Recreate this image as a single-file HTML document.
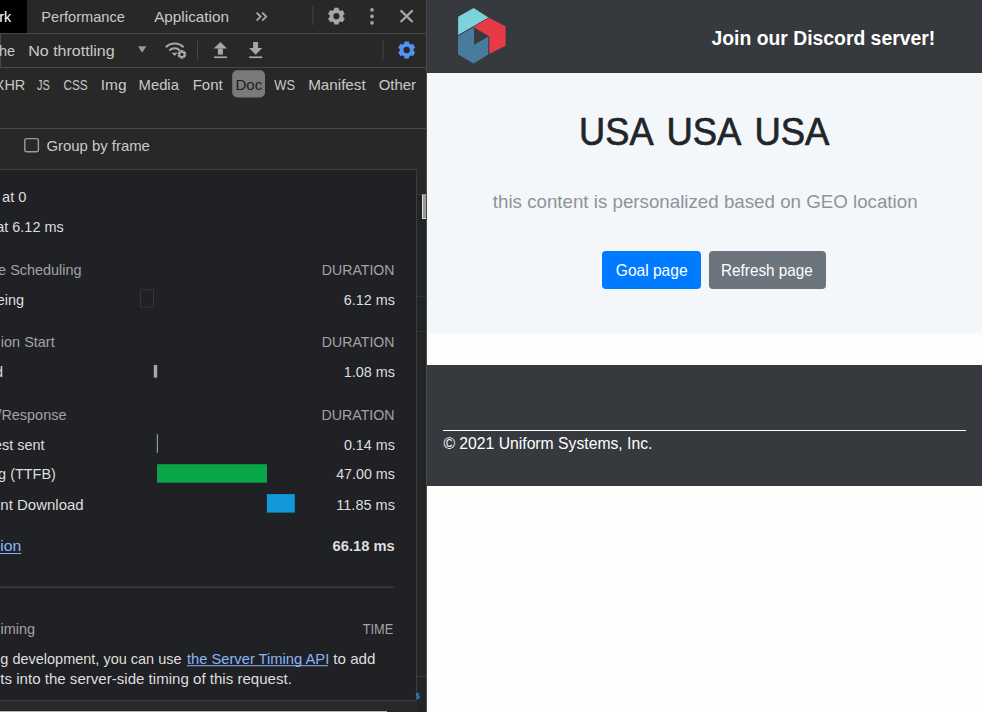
<!DOCTYPE html>
<html><head><meta charset="utf-8"><title>DevTools</title>
<style>
html,body{margin:0;padding:0;width:982px;height:712px;overflow:hidden;background:#fdfdfc;}
svg{position:absolute;left:0;top:0;display:block;font-family:"Liberation Sans",sans-serif;}
</style></head><body>
<svg width="982" height="712" viewBox="0 0 982 712">
<rect x="0" y="0" width="426" height="712" fill="#282828"/>
<rect x="0" y="0" width="27" height="33" fill="#000"/>
<rect x="0" y="33" width="426" height="1" fill="#474747"/>
<rect x="0" y="67" width="426" height="1" fill="#474747"/>
<rect x="0" y="128" width="426" height="1" fill="#474747"/>
<rect x="0" y="34" width="1" height="33" fill="#474747"/>
<rect x="426" y="0" width="1" height="712" fill="#4a4a4a"/>
<path d="M256.6,12.6 L260.6,16.6 L256.6,20.6 M262.2,12.6 L266.2,16.6 L262.2,20.6" fill="none" stroke="#a6a6a6" stroke-width="1.9"/>
<rect x="312.5" y="6" width="1" height="19" fill="#454545"/>
<rect x="197" y="40.5" width="1" height="19" fill="#454545"/>
<rect x="382.5" y="40" width="1" height="20" fill="#454545"/>
<path d="M338.80,9.84 L338.63,7.79 L334.17,7.79 L334.00,9.84 L333.49,10.05 L333.00,10.31 L332.53,10.61 L332.09,10.94 L330.23,10.06 L328.00,13.93 L329.69,15.09 L329.62,15.64 L329.60,16.20 L329.62,16.76 L329.69,17.31 L328.00,18.47 L330.23,22.34 L332.09,21.46 L332.53,21.79 L333.00,22.09 L333.49,22.35 L334.00,22.56 L334.17,24.61 L338.63,24.61 L338.80,22.56 L339.31,22.35 L339.80,22.09 L340.27,21.79 L340.71,21.46 L342.57,22.34 L344.80,18.47 L343.11,17.31 L343.18,16.76 L343.20,16.20 L343.18,15.64 L343.11,15.09 L344.80,13.93 L342.57,10.06 L340.71,10.94 L340.27,10.61 L339.80,10.31 L339.31,10.05Z M333.30,16.20 a3.1,3.1 0 1,0 6.2,0 a3.1,3.1 0 1,0 -6.2,0Z" fill="#a6a6a6" fill-rule="evenodd"/>
<circle cx="372" cy="9.9" r="1.8" fill="#a6a6a6"/>
<circle cx="372" cy="16.4" r="1.8" fill="#a6a6a6"/>
<circle cx="372" cy="22.9" r="1.8" fill="#a6a6a6"/>
<path d="M400.6,10.4 L412.6,22 M412.6,10.4 L400.6,22" stroke="#a6a6a6" stroke-width="2.2" fill="none"/>
<polygon points="138,46.3 146.3,46.3 142.15,52.8" fill="#9a9a9a"/>
<path d="M165.8,47.2 A12.6,12.6 0 0 1 183.6,47.2" fill="none" stroke="#a6a6a6" stroke-width="2.1"/>
<path d="M169.3,50.4 A7.6,7.6 0 0 1 179.9,50.4" fill="none" stroke="#a6a6a6" stroke-width="2.1"/>
<path d="M171.6,52.8 L177.6,52.8 L174.6,56 Z" fill="#a6a6a6"/>
<path d="M183.42,51.25 L183.36,50.04 L180.44,50.04 L180.38,51.25 L180.26,51.31 L180.15,51.37 L180.04,51.44 L179.93,51.51 L178.86,50.95 L177.39,53.49 L178.41,54.14 L178.40,54.27 L178.40,54.40 L178.40,54.53 L178.41,54.66 L177.39,55.31 L178.86,57.85 L179.93,57.29 L180.04,57.36 L180.15,57.43 L180.26,57.49 L180.38,57.55 L180.44,58.76 L183.36,58.76 L183.42,57.55 L183.54,57.49 L183.65,57.43 L183.76,57.36 L183.87,57.29 L184.94,57.85 L186.41,55.31 L185.39,54.66 L185.40,54.53 L185.40,54.40 L185.40,54.27 L185.39,54.14 L186.41,53.49 L184.94,50.95 L183.87,51.51 L183.76,51.44 L183.65,51.37 L183.54,51.31Z M180.30,54.40 a1.6,1.6 0 1,0 3.2,0 a1.6,1.6 0 1,0 -3.2,0Z" fill="#a6a6a6" fill-rule="evenodd"/>
<polygon points="213.7,48.6 220.4,42 227.1,48.6" fill="#a6a6a6"/>
<rect x="217.9" y="48.5" width="5" height="6.1" fill="#a6a6a6"/>
<rect x="214" y="56.4" width="13" height="1.7" fill="#a6a6a6"/>
<rect x="253.1" y="42" width="5" height="6.2" fill="#a6a6a6"/>
<polygon points="249,48.1 262.3,48.1 255.65,54.7" fill="#a6a6a6"/>
<rect x="249.2" y="56.4" width="13" height="1.7" fill="#a6a6a6"/>
<path d="M409.13,43.54 L408.96,41.49 L404.44,41.49 L404.27,43.54 L403.75,43.76 L403.25,44.02 L402.77,44.33 L402.32,44.67 L400.46,43.79 L398.21,47.70 L399.89,48.88 L399.82,49.44 L399.80,50.00 L399.82,50.56 L399.89,51.12 L398.21,52.30 L400.46,56.21 L402.32,55.33 L402.77,55.67 L403.25,55.98 L403.75,56.24 L404.27,56.46 L404.44,58.51 L408.96,58.51 L409.13,56.46 L409.65,56.24 L410.15,55.98 L410.63,55.67 L411.08,55.33 L412.94,56.21 L415.19,52.30 L413.51,51.12 L413.58,50.56 L413.60,50.00 L413.58,49.44 L413.51,48.88 L415.19,47.70 L412.94,43.79 L411.08,44.67 L410.63,44.33 L410.15,44.02 L409.65,43.76Z M403.50,50.00 a3.2,3.2 0 1,0 6.4,0 a3.2,3.2 0 1,0 -6.4,0Z" fill="#5391f4" fill-rule="evenodd"/>
<rect x="232.2" y="70.3" width="32.8" height="27.2" rx="5" fill="#7a7a7a"/>
<rect x="24.8" y="138.6" width="13.6" height="13.2" rx="2" fill="none" stroke="#9c9c9c" stroke-width="1.4"/>
<rect x="-3" y="169.5" width="419.5" height="531" fill="#202124" stroke="#3d3d3d" stroke-width="1"/>
<rect x="417" y="194" width="9" height="518" fill="#232426"/>
<rect x="417" y="194" width="9" height="1" fill="#3a3a3a"/>
<rect x="417" y="296" width="9" height="1" fill="#333"/>
<rect x="417" y="331" width="9" height="1" fill="#333"/>
<rect x="417" y="676" width="9" height="1" fill="#3a3a3a"/>
<rect x="422" y="194.5" width="4" height="24.5" fill="#e0e0e0"/>
<rect x="423" y="195" width="3" height="23" fill="#9a9a9a"/>
<rect x="140.5" y="289.7" width="13" height="17.5" fill="none" stroke="#333538" stroke-width="1"/>
<rect x="153.8" y="365" width="3.4" height="12.6" fill="#a8a8a8"/>
<rect x="156.8" y="434.2" width="1.2" height="18.6" fill="#8a9bb0"/>
<rect x="157.1" y="464.2" width="109.8" height="18.5" fill="#09a748"/>
<rect x="266.9" y="494.1" width="27.9" height="18.5" fill="#1399d9"/>
<rect x="0" y="553" width="21.3" height="1" fill="#8ab4f8"/>
<rect x="186.9" y="665.2" width="141.3" height="1" fill="#8ab4f8"/>
<rect x="0" y="586.6" width="393.5" height="1" fill="#4a4a4a"/>
<rect x="0" y="711" width="387" height="1" fill="#b4b4b4"/>
<rect x="427" y="0" width="555" height="712" fill="#fdfdfc"/>
<rect x="427" y="0" width="555" height="73" fill="#36393d"/>
<rect x="427" y="73" width="555" height="260" fill="#f3f7fa"/>
<rect x="427" y="365" width="555" height="121" fill="#36393d"/>
<rect x="443" y="430" width="523" height="1" fill="#ffffff"/>
<polygon points="458.1,16.7 473.6,8.1 488.5,17.5 458.1,34.9" fill="#7dd3d9"/>
<polygon points="474.1,26.5 489.3,17.7 505.6,26.5 505.6,45.7 489.3,54.1 489.3,36.4 474.1,27.5" fill="#e63a47"/>
<polygon points="458.1,35.9 474.1,27 474.1,44.7 488.3,36.6 488.3,54.6 473.6,63.4 458.1,54.6" fill="#497b9e"/>
<rect x="602" y="251" width="99" height="38" rx="4" fill="#007bff"/>
<rect x="709" y="251" width="117" height="38" rx="4" fill="#6c757d"/>
<text x="-0.83" y="21.70" font-size="14.6" fill="#ffffff" textLength="12.03" lengthAdjust="spacingAndGlyphs" style="" >rk</text>
<text x="41.30" y="21.70" font-size="14.6" fill="#c8c8c8" textLength="83.62" lengthAdjust="spacingAndGlyphs" style="" >Performance</text>
<text x="154.20" y="21.70" font-size="14.6" fill="#c8c8c8" textLength="74.72" lengthAdjust="spacingAndGlyphs" style="" >Application</text>
<text x="-0.95" y="56.00" font-size="14.6" fill="#c8c8c8" textLength="16.07" lengthAdjust="spacingAndGlyphs" style="" >he</text>
<text x="28.20" y="56.00" font-size="14.6" fill="#c8c8c8" textLength="86.43" lengthAdjust="spacingAndGlyphs" style="" >No throttling</text>
<text x="-5.26" y="89.60" font-size="14.6" fill="#c8c8c8" textLength="30.50" lengthAdjust="spacingAndGlyphs" style="" >XHR</text>
<text x="37.00" y="89.60" font-size="14.6" fill="#c8c8c8" textLength="12.80" lengthAdjust="spacingAndGlyphs" style="" >JS</text>
<text x="63.40" y="89.60" font-size="14.6" fill="#c8c8c8" textLength="24.38" lengthAdjust="spacingAndGlyphs" style="" >CSS</text>
<text x="100.74" y="89.60" font-size="14.6" fill="#c8c8c8" textLength="25.78" lengthAdjust="spacingAndGlyphs" style="" >Img</text>
<text x="138.59" y="89.60" font-size="14.6" fill="#c8c8c8" textLength="40.32" lengthAdjust="spacingAndGlyphs" style="" >Media</text>
<text x="192.67" y="89.60" font-size="14.6" fill="#c8c8c8" textLength="29.98" lengthAdjust="spacingAndGlyphs" style="" >Font</text>
<text x="235.47" y="89.60" font-size="14.6" fill="#1e1e1e" textLength="26.84" lengthAdjust="spacingAndGlyphs" style="" >Doc</text>
<text x="274.30" y="89.60" font-size="14.6" fill="#c8c8c8" textLength="20.76" lengthAdjust="spacingAndGlyphs" style="" >WS</text>
<text x="308.16" y="89.60" font-size="14.6" fill="#c8c8c8" textLength="57.50" lengthAdjust="spacingAndGlyphs" style="" >Manifest</text>
<text x="378.70" y="89.60" font-size="14.6" fill="#c8c8c8" textLength="37.36" lengthAdjust="spacingAndGlyphs" style="" >Other</text>
<text x="46.40" y="150.50" font-size="14.6" fill="#c8c8c8" textLength="103.52" lengthAdjust="spacingAndGlyphs" style="" >Group by frame</text>
<text x="2.10" y="201.80" font-size="14.6" fill="#dedede" textLength="24.42" lengthAdjust="spacingAndGlyphs" style="" >at 0</text>
<text x="-3.75" y="231.70" font-size="14.6" fill="#dedede" textLength="67.44" lengthAdjust="spacingAndGlyphs" style="" >at 6.12 ms</text>
<text x="-1.91" y="275.40" font-size="14.6" fill="#a3a3a3" textLength="83.52" lengthAdjust="spacingAndGlyphs" style="" >e Scheduling</text>
<text x="321.83" y="274.70" font-size="14.6" fill="#a3a3a3" textLength="72.69" lengthAdjust="spacingAndGlyphs" style="" >DURATION</text>
<text x="-3.19" y="304.90" font-size="14.6" fill="#dedede" textLength="27.31" lengthAdjust="spacingAndGlyphs" style="" >eing</text>
<text x="343.80" y="304.70" font-size="14.6" fill="#dedede" textLength="51.09" lengthAdjust="spacingAndGlyphs" style="" >6.12 ms</text>
<text x="0.86" y="347.00" font-size="14.6" fill="#a3a3a3" textLength="53.79" lengthAdjust="spacingAndGlyphs" style="" >ion Start</text>
<text x="321.83" y="346.70" font-size="14.6" fill="#a3a3a3" textLength="72.69" lengthAdjust="spacingAndGlyphs" style="" >DURATION</text>
<text x="-4.92" y="376.60" font-size="14.6" fill="#dedede" textLength="8.03" lengthAdjust="spacingAndGlyphs" style="" >d</text>
<text x="343.71" y="376.50" font-size="14.6" fill="#dedede" textLength="51.18" lengthAdjust="spacingAndGlyphs" style="" >1.08 ms</text>
<text x="-2.64" y="420.20" font-size="14.6" fill="#a3a3a3" textLength="69.06" lengthAdjust="spacingAndGlyphs" style="" >/Response</text>
<text x="321.53" y="420.00" font-size="14.6" fill="#a3a3a3" textLength="73.00" lengthAdjust="spacingAndGlyphs" style="" >DURATION</text>
<text x="-6.03" y="449.90" font-size="14.6" fill="#dedede" textLength="50.59" lengthAdjust="spacingAndGlyphs" style="" >est sent</text>
<text x="343.90" y="449.90" font-size="14.6" fill="#dedede" textLength="50.99" lengthAdjust="spacingAndGlyphs" style="" >0.14 ms</text>
<text x="-1.92" y="479.30" font-size="14.6" fill="#dedede" textLength="57.77" lengthAdjust="spacingAndGlyphs" style="" >g (TTFB)</text>
<text x="336.20" y="479.30" font-size="14.6" fill="#dedede" textLength="58.69" lengthAdjust="spacingAndGlyphs" style="" >47.00 ms</text>
<text x="0.30" y="509.80" font-size="14.6" fill="#dedede" textLength="83.42" lengthAdjust="spacingAndGlyphs" style="" >nt Download</text>
<text x="336.31" y="509.80" font-size="14.6" fill="#dedede" textLength="58.59" lengthAdjust="spacingAndGlyphs" style="" >11.85 ms</text>
<text x="0.30" y="551.00" font-size="14.6" fill="#8ab4f8" textLength="21.13" lengthAdjust="spacingAndGlyphs" style="" >ion</text>
<text x="332.50" y="551.10" font-size="14.6" fill="#dedede" textLength="62.22" lengthAdjust="spacingAndGlyphs" style="font-weight:bold;" >66.18 ms</text>
<text x="0.60" y="634.00" font-size="14.6" fill="#a3a3a3" textLength="34.52" lengthAdjust="spacingAndGlyphs" style="" >iming</text>
<text x="362.70" y="634.00" font-size="14.6" fill="#a3a3a3" textLength="30.57" lengthAdjust="spacingAndGlyphs" style="" >TIME</text>
<text x="0.30" y="664.20" font-size="14.6" fill="#dedede" textLength="181.22" lengthAdjust="spacingAndGlyphs" style="" >g development, you can use</text>
<text x="186.90" y="664.20" font-size="14.6" fill="#8ab4f8" textLength="142.36" lengthAdjust="spacingAndGlyphs" style="" >the Server Timing API</text>
<text x="333.30" y="664.20" font-size="14.6" fill="#dedede" textLength="42.12" lengthAdjust="spacingAndGlyphs" style="" >to add</text>
<text x="416.00" y="699.00" font-size="11" fill="#2f9bf5" textLength="3.87" lengthAdjust="spacingAndGlyphs" style="font-weight:bold;" >s</text>
<text x="0.30" y="683.80" font-size="14.6" fill="#dedede" textLength="291.59" lengthAdjust="spacingAndGlyphs" style="" >ts into the server-side timing of this request.</text>
<text x="711.50" y="44.70" font-size="19.5" fill="#ffffff" textLength="223.68" lengthAdjust="spacingAndGlyphs" style="font-weight:bold;" >Join our Discord server!</text>
<text x="579.11" y="144.50" font-size="38.4" fill="#212529" textLength="74.41" lengthAdjust="spacingAndGlyphs" style="" stroke="#212529" stroke-width="0.7">USA</text>
<text x="666.50" y="144.50" font-size="38.4" fill="#212529" textLength="74.92" lengthAdjust="spacingAndGlyphs" style="" stroke="#212529" stroke-width="0.7">USA</text>
<text x="754.50" y="144.50" font-size="38.4" fill="#212529" textLength="74.92" lengthAdjust="spacingAndGlyphs" style="" stroke="#212529" stroke-width="0.7">USA</text>
<text x="492.80" y="207.80" font-size="19.0" fill="#8d9399" textLength="424.76" lengthAdjust="spacingAndGlyphs" style="" >this content is personalized based on GEO location</text>
<text x="615.80" y="276.30" font-size="16.5" fill="#ffffff" textLength="71.77" lengthAdjust="spacingAndGlyphs" style="" >Goal page</text>
<text x="721.08" y="276.30" font-size="16.5" fill="#ffffff" textLength="91.59" lengthAdjust="spacingAndGlyphs" style="" >Refresh page</text>
<text x="443.40" y="448.70" font-size="16.0" fill="#ffffff" textLength="209.02" lengthAdjust="spacingAndGlyphs" style="" >© 2021 Uniform Systems, Inc.</text>
</svg>
</body></html>
